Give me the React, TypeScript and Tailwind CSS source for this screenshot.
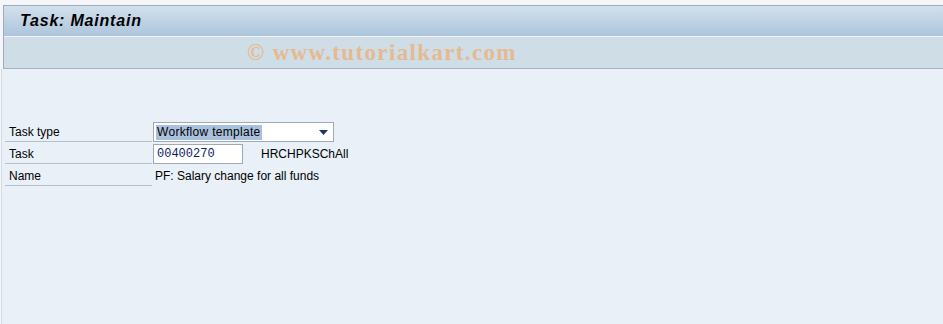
const sans = "font-['Tahoma','Liberation_Sans',sans-serif]";

function LabelCell({ children }: { children: string }) {
  return (
    <div className="ml-[3px] flex h-full w-[147px] items-end border-b border-[#b4c0cc] pb-[2px] pl-[4px] text-[12px] leading-[14px] text-black">
      {children}
    </div>
  );
}

export default function App() {
  return (
    <div className={`h-[324px] w-[943px] overflow-hidden bg-[#f5f6fa] pt-[5px] ${sans}`}>
      <div className="ml-[3px] border-l border-t border-[#9eabba]">
        <div className="flex h-[30px] items-center bg-gradient-to-b from-[#d2e0ec] to-[#adc5dc] pl-[16px]">
          <span className="text-[16px] font-bold italic leading-none tracking-[0.8px] text-black">Task: Maintain</span>
        </div>
        <div className="h-px bg-[#eef4f9]" />
        <div className="flex h-[32px] items-center border-b border-[#a5b3c1] bg-[#cfdde7] pl-[243px]">
          <span className="font-['Liberation_Serif',serif] text-[23px] font-bold leading-none tracking-[1.35px] text-[#ebb27c] opacity-80">
            © www.tutorialkart.com
          </span>
        </div>
      </div>
      <div className="ml-px h-[260px] border-l border-[#d4dbe3] bg-[#e9f0f7] pt-[51px]">
        <div className="flex h-[22px] items-end">
          <LabelCell>Task type</LabelCell>
          <div className="ml-px flex h-[20px] w-[181px] items-center justify-between border border-[#9ea9b4] bg-white pl-[2px] pr-[5px]">
            <span className="bg-[#a9c1dd] px-px text-[12px] leading-[15px] tracking-[0.3px] text-black">Workflow template</span>
            <svg width="9" height="5" viewBox="0 0 9 5">
              <path d="M0 0h9L4.5 5z" fill="#1f3a66" />
            </svg>
          </div>
        </div>
        <div className="flex h-[22px] items-end">
          <LabelCell>Task</LabelCell>
          <div className="ml-px flex h-[20px] w-[90px] items-center border border-[#9ea9b4] bg-white pl-[3px]">
            <span className="font-['Liberation_Mono',monospace] text-[12px] leading-none text-[#0c1b6b]">00400270</span>
          </div>
          <span className="mb-[3px] ml-[18px] text-[12px] leading-[14px] text-black">HRCHPKSChAll</span>
        </div>
        <div className="flex h-[22px] items-end">
          <LabelCell>Name</LabelCell>
          <span className="mb-[3px] ml-[3px] text-[12px] leading-[14px] text-black">PF: Salary change for all funds</span>
        </div>
      </div>
    </div>
  );
}
